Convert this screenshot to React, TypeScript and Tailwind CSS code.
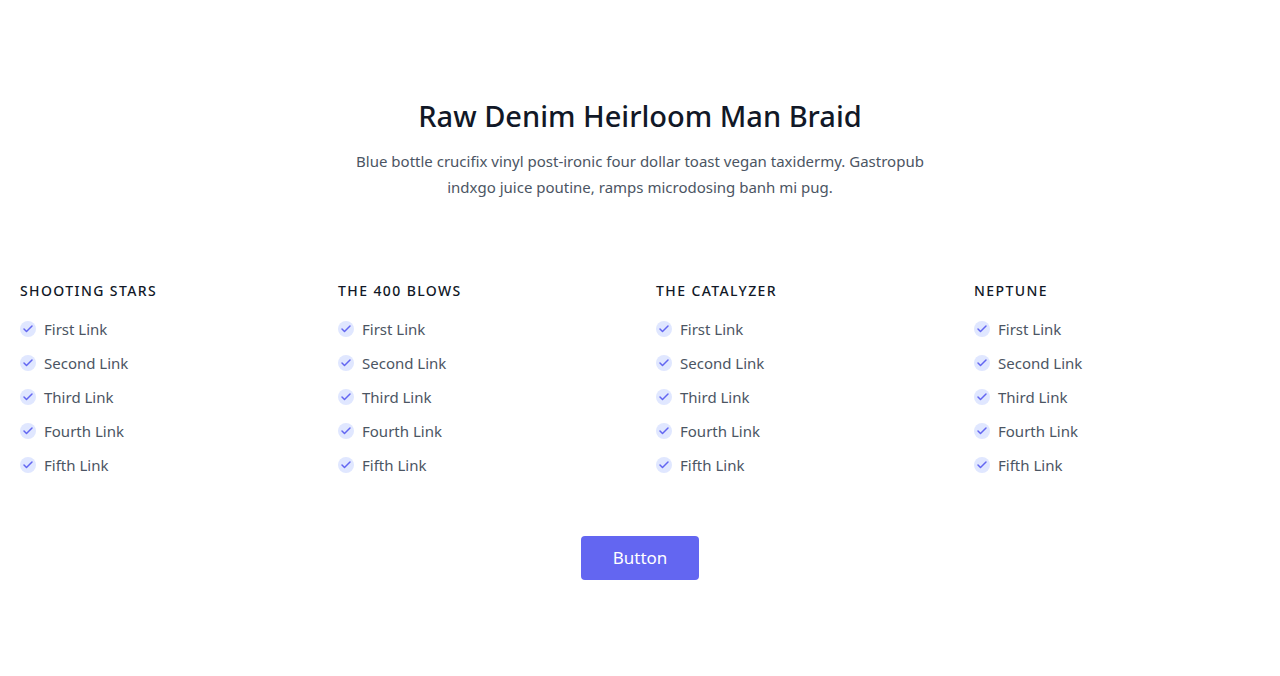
const columns = ["Shooting Stars", "The 400 Blows", "The Catalyzer", "Neptune"];
const links = ["First Link", "Second Link", "Third Link", "Fourth Link", "Fifth Link"];

function Check() {
  return (
    <span className="mr-2 inline-flex h-4 w-4 shrink-0 items-center justify-center rounded-full bg-[#e0e7ff] text-[#6366f1]">
      <svg
        aria-hidden="true"
        fill="none"
        stroke="currentColor"
        strokeLinecap="round"
        strokeLinejoin="round"
        strokeWidth="3"
        className="h-3 w-3"
        viewBox="0 0 24 24"
      >
        <path d="M20 6L9 17l-5-5" />
      </svg>
    </span>
  );
}

export default function App() {
  return (
    <section className="font-['Noto_Sans',sans-serif] text-[15px] leading-6 text-[#4b5563]">
      <div className="mx-auto px-5 py-24">
        <div className="mb-20 text-center">
          <h1 className="mb-3 text-[29px] leading-10 font-medium text-[#111827]">Raw Denim Heirloom Man Braid</h1>
          <p className="mx-auto max-w-xl leading-[26px]">
            Blue bottle crucifix vinyl post-ironic four dollar toast vegan taxidermy. Gastropub indxgo juice poutine, ramps microdosing banh mi pug.
          </p>
        </div>
        <div className="-mx-4 flex flex-wrap">
          {columns.map((title) => (
            <div key={title} className="w-full px-4 sm:w-1/2 lg:w-1/4">
              <h2 className="mb-[15px] text-left text-sm leading-[22px] font-medium tracking-widest text-[#111827] uppercase">{title}</h2>
              <nav aria-label={title} className="mb-10 flex flex-col items-start space-y-2.5">
                {links.map((link) => (
                  <a key={link} href="#" className="flex items-center">
                    <Check />
                    {link}
                  </a>
                ))}
              </nav>
            </div>
          ))}
        </div>
        <button className="mx-auto mt-[19px] flex rounded border-0 bg-[#6366f1] px-8 py-2 text-[17px] leading-7 text-white">Button</button>
      </div>
    </section>
  );
}
